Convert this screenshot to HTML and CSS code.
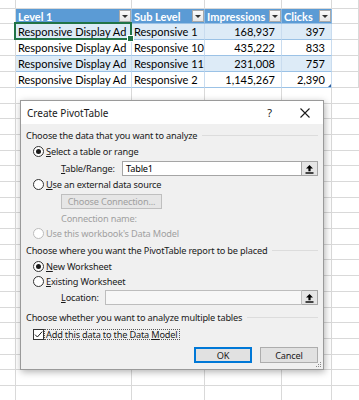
FILE: index.html
```html
<!DOCTYPE html>
<html>
<head>
<meta charset="utf-8">
<link rel="stylesheet" href="styles.css">
</head>
<body>
<div class="sheet">
  <div class="row r0">
    <div class="c"></div><div class="c"></div><div class="c"></div><div class="c"></div><div class="c"></div><div class="c"></div>
  </div>
  <div class="row rh">
    <div class="c"></div>
    <div class="c t th"><span>Level 1</span><i class="dd"></i></div>
    <div class="c t th"><span>Sub Level</span><i class="dd"></i></div>
    <div class="c t th"><span>Impressions</span><i class="dd"></i></div>
    <div class="c t th"><span>Clicks</span><i class="dd"></i></div>
    <div class="c"></div>
  </div>
  <div class="row rd band">
    <div class="c"></div>
    <div class="c t">Responsive Display Ad</div>
    <div class="c t">Responsive 1</div>
    <div class="c t num">168,937</div>
    <div class="c t num">397</div>
    <div class="c"></div>
  </div>
  <div class="row rd">
    <div class="c"></div>
    <div class="c t">Responsive Display Ad</div>
    <div class="c t">Responsive 10</div>
    <div class="c t num">435,222</div>
    <div class="c t num">833</div>
    <div class="c"></div>
  </div>
  <div class="row rd band">
    <div class="c"></div>
    <div class="c t">Responsive Display Ad</div>
    <div class="c t">Responsive 11</div>
    <div class="c t num">231,008</div>
    <div class="c t num">757</div>
    <div class="c"></div>
  </div>
  <div class="row rd last">
    <div class="c"></div>
    <div class="c t">Responsive Display Ad</div>
    <div class="c t">Responsive 2</div>
    <div class="c t num">1,145,267</div>
    <div class="c t num corner">2,390</div>
    <div class="c"></div>
  </div>
  <div class="rest"></div>

  <div class="selcell"><i class="handle"></i></div>

  <div class="dlg">
    <div class="titlebar">
      <span class="ttl">Create PivotTable</span>
      <span class="help">?</span>
      <svg class="close" width="10" height="10" viewBox="0 0 10 10"><path d="M0.5 0.5 L9.5 9.5 M9.5 0.5 L0.5 9.5" stroke="#1a1a1a" stroke-width="1.1" fill="none"/></svg>
    </div>
    <div class="dbody">
      <div class="grp g1"><span>Choose the data that you want to analyze</span></div>
      <div class="opt h16"><span class="radio on"></span><span><u>S</u>elect a table or range</span></div>
      <div class="field f1">
        <span class="lbl"><span><u>T</u>able/Range:</span></span>
        <span class="inp">Table1</span>
        <span class="pick"><svg width="9" height="10" viewBox="0 0 9 10"><path d="M4.5 1 L1 4.6 L3.4 4.6 L3.4 7.2 L5.6 7.2 L5.6 4.6 L8 4.6 Z" fill="#000"/><rect x="0.5" y="8.3" width="8" height="1.4" fill="#000"/></svg></span>
      </div>
      <div class="opt h16"><span class="radio"></span><span><u>U</u>se an external data source</span></div>
      <div class="sub connrow"><span class="btn disbtn">Choose Connection...</span></div>
      <div class="sub connname dis">Connection name:</div>
      <div class="opt h16 dis"><span class="radio disr"></span><span>Use this workbook's Data Model</span></div>
      <div class="grp g2"><span>Choose where you want the PivotTable report to be placed</span></div>
      <div class="opt h16"><span class="radio on"></span><span><u>N</u>ew Worksheet</span></div>
      <div class="opt h15"><span class="radio"></span><span><u>E</u>xisting Worksheet</span></div>
      <div class="field f2">
        <span class="lbl"><span><u>L</u>ocation:</span></span>
        <span class="inp disinp"></span>
        <span class="pick"><svg width="9" height="10" viewBox="0 0 9 10"><path d="M4.5 1 L1 4.6 L3.4 4.6 L3.4 7.2 L5.6 7.2 L5.6 4.6 L8 4.6 Z" fill="#000"/><rect x="0.5" y="8.3" width="8" height="1.4" fill="#000"/></svg></span>
      </div>
      <div class="grp g3"><span>Choose whether you want to analyze multiple tables</span></div>
      <div class="opt chkrow"><span class="chk"><svg width="9" height="9" viewBox="0 0 9 9"><path d="M1 4.6 L3.4 7 L8.2 1.6" stroke="#1a1a1a" stroke-width="1" fill="none"/></svg></span><span class="focus">Add this data to the Data <u>M</u>odel</span></div>
      <div class="btns">
        <span class="btn okbtn">OK</span>
        <span class="btn">Cancel</span>
      </div>
    </div>
    <svg class="grip" width="7" height="7" viewBox="0 0 7 7"><g fill="#8a8a8a"><rect x="5" y="1" width="1" height="1"/><rect x="3" y="3" width="1" height="1"/><rect x="5" y="3" width="1" height="1"/><rect x="1" y="5" width="1" height="1"/><rect x="3" y="5" width="1" height="1"/><rect x="5" y="5" width="1" height="1"/></g></svg>
  </div>
</div>
</body>
</html>
```
FILE: styles.css
```css
html, body {
  margin: 0;
  padding: 0;
  background: #fff;
}
body {
  width: 359px;
  height: 400px;
  overflow: hidden;
  font-family: "Lato", "Liberation Sans", sans-serif;
}
.sheet {
  position: relative;
  width: 359px;
  height: 400px;
  display: flex;
  flex-direction: column;
}
.row {
  display: grid;
  grid-template-columns: 16px 116px 73px 77px 50px 1fr;
  flex: none;
}
.c {
  box-sizing: border-box;
  border-right: 1px solid #d9d9d9;
  border-bottom: 1px solid #d9d9d9;
  background: #fff;
  min-width: 0;
}
.r0 .c { height: 9px; }
.rh .c { height: 15px; }
.rd .c { height: 16px; }

.t {
  font-size: 11px;
  color: #000;
  display: flex;
  align-items: center;
  padding-left: 2px;
  white-space: nowrap;
  overflow: hidden;
  border-right-color: #c9dcef;
  border-bottom-color: #9bc2e6;
}
.band .t { background: #ddebf7; }
.th {
  background: #5b9bd5;
  color: #fff;
  font-weight: bold;
  border-right-color: #8bb8e2;
  border-bottom-color: #9bc2e6;
  justify-content: space-between;
  padding-right: 0;
}
.num {
  justify-content: flex-end;
  padding-right: 6px;
}
.dd {
  width: 12px;
  height: 12px;
  box-sizing: border-box;
  border: 1px solid #a9a9a9;
  background: linear-gradient(#fbfbfb, #e6e6e6);
  position: relative;
  flex: none;
}
.dd::after {
  content: "";
  position: absolute;
  left: 2px;
  top: 4px;
  border-left: 3px solid transparent;
  border-right: 3px solid transparent;
  border-top: 3px solid #333;
}
.corner { position: relative; }
.corner::after {
  content: "";
  position: absolute;
  right: 0;
  bottom: 0;
  border-left: 3px solid transparent;
  border-bottom: 3px solid #2f5f9e;
}
.rest {
  flex: 1;
  background-color: #fff;
  background-image:
    linear-gradient(to right,
      transparent 15px, #d9d9d9 15px, #d9d9d9 16px, transparent 16px,
      transparent 131px, #d9d9d9 131px, #d9d9d9 132px, transparent 132px,
      transparent 204px, #d9d9d9 204px, #d9d9d9 205px, transparent 205px,
      transparent 281px, #d9d9d9 281px, #d9d9d9 282px, transparent 282px,
      transparent 331px, #d9d9d9 331px, #d9d9d9 332px, transparent 332px),
    repeating-linear-gradient(to bottom, transparent 0, transparent 14.68px, #d9d9d9 14.68px, #d9d9d9 15.68px);
}
.selcell {
  position: absolute;
  left: 14px;
  top: 22px;
  width: 118px;
  height: 18px;
  box-sizing: border-box;
  border: 2px solid #217346;
}
.handle {
  position: absolute;
  right: -4px;
  bottom: -4px;
  width: 5px;
  height: 5px;
  background: #217346;
  border: 1px solid #fff;
}

/* dialog */
.dlg {
  position: absolute;
  left: 20px;
  top: 100px;
  width: 304px;
  height: 270px;
  box-sizing: border-box;
  border: 1px solid #9a9a9a;
  background: #f0f0f0;
  box-shadow: 1px 2px 7px rgba(0, 0, 0, 0.3);
  font-family: "Noto Sans", "Open Sans", sans-serif;
  font-size: 9.2px;
  letter-spacing: -0.18px;
  color: #1a1a1a;
  display: flex;
  flex-direction: column;
}
.titlebar {
  height: 23px;
  background: #fff;
  display: flex;
  align-items: center;
  padding-left: 6px;
  padding-right: 13px;
  flex: none;
  letter-spacing: 0;
}
.ttl {
  font-size: 10px;
  flex: 1;
}
.help {
  font-size: 11px;
  margin-right: 28px;
}
.close { display: block; }
.dbody {
  padding: 0 5px 0 5px;
  display: flex;
  flex-direction: column;
}
.grp {
  display: flex;
  align-items: center;
  height: 16px;
  white-space: nowrap;
}
.grp::after {
  content: "";
  flex: 1;
  height: 1px;
  background: #dcdcdc;
  margin-left: 5px;
}
.g1 { margin-top: 3px; }
.g2 { margin-top: 1px; }
.g3 { margin-top: 4px; }
.opt {
  display: flex;
  align-items: center;
  padding-left: 7px;
  white-space: nowrap;
}
.h16 { height: 16px; }
.h15 { height: 15px; }
.radio {
  width: 11px;
  height: 11px;
  box-sizing: border-box;
  border: 1px solid #333;
  border-radius: 50%;
  background: #fff;
  margin-right: 2px;
  position: relative;
  flex: none;
}
.radio.on::after {
  content: "";
  position: absolute;
  left: 2px;
  top: 2px;
  width: 5px;
  height: 5px;
  border-radius: 50%;
  background: #1a1a1a;
}
.radio.disr { border-color: #bcbcbc; }
.dis { color: #a0a0a0; }
.field {
  display: flex;
  align-items: stretch;
  height: 15px;
  padding-left: 35px;
}
.f1 { margin-top: 2px; }
.f2 { margin-top: 1px; }
.lbl {
  display: flex;
  align-items: center;
}
.f1 .lbl { width: 61px; }
.f2 .lbl { width: 44px; }
.inp {
  flex: 1;
  box-sizing: border-box;
  border: 1px solid #a5a5a5;
  background: #fff;
  display: flex;
  align-items: center;
  padding-left: 3px;
  color: #000;
}
.disinp {
  background: #f7f7f7;
  border-color: #bdbdbd;
}
.pick {
  width: 16px;
  box-sizing: border-box;
  border: 1px solid #a5a5a5;
  border-left: none;
  background: #e5e5e5;
  display: flex;
  align-items: center;
  justify-content: center;
}
.pick svg { display: block; }
.sub { padding-left: 35px; }
.connrow {
  margin-top: 2px;
  height: 15px;
  display: flex;
}
.btn {
  box-sizing: border-box;
  border: 1px solid #adadad;
  background: #e1e1e1;
  display: flex;
  align-items: center;
  justify-content: center;
}
.disbtn {
  width: 101px;
  color: #a0a0a0;
  border-color: #bfbfbf;
  background: #e6e6e6;
}
.connname {
  margin-top: 2px;
  height: 14px;
  display: flex;
  align-items: center;
}
.chkrow {
  margin-top: 1px;
  height: 16px;
}
.chk {
  width: 11px;
  height: 11px;
  box-sizing: border-box;
  border: 1px solid #333;
  background: #fff;
  display: flex;
  align-items: center;
  justify-content: center;
  flex: none;
}
.chk svg { display: block; }
.focus {
  display: inline-block;
  border: 1px dotted #555;
  padding: 0 2px 0 1px;
  line-height: 10px;
  height: 11px;
  box-sizing: border-box;
}
.btns {
  margin-top: 5px;
  height: 16px;
  display: flex;
  justify-content: flex-end;
  gap: 8px;
}
.btns .btn { width: 58px; }
.okbtn {
  border: 2px solid #0078d7;
}
.grip {
  position: absolute;
  right: 1px;
  bottom: 1px;
}
```
